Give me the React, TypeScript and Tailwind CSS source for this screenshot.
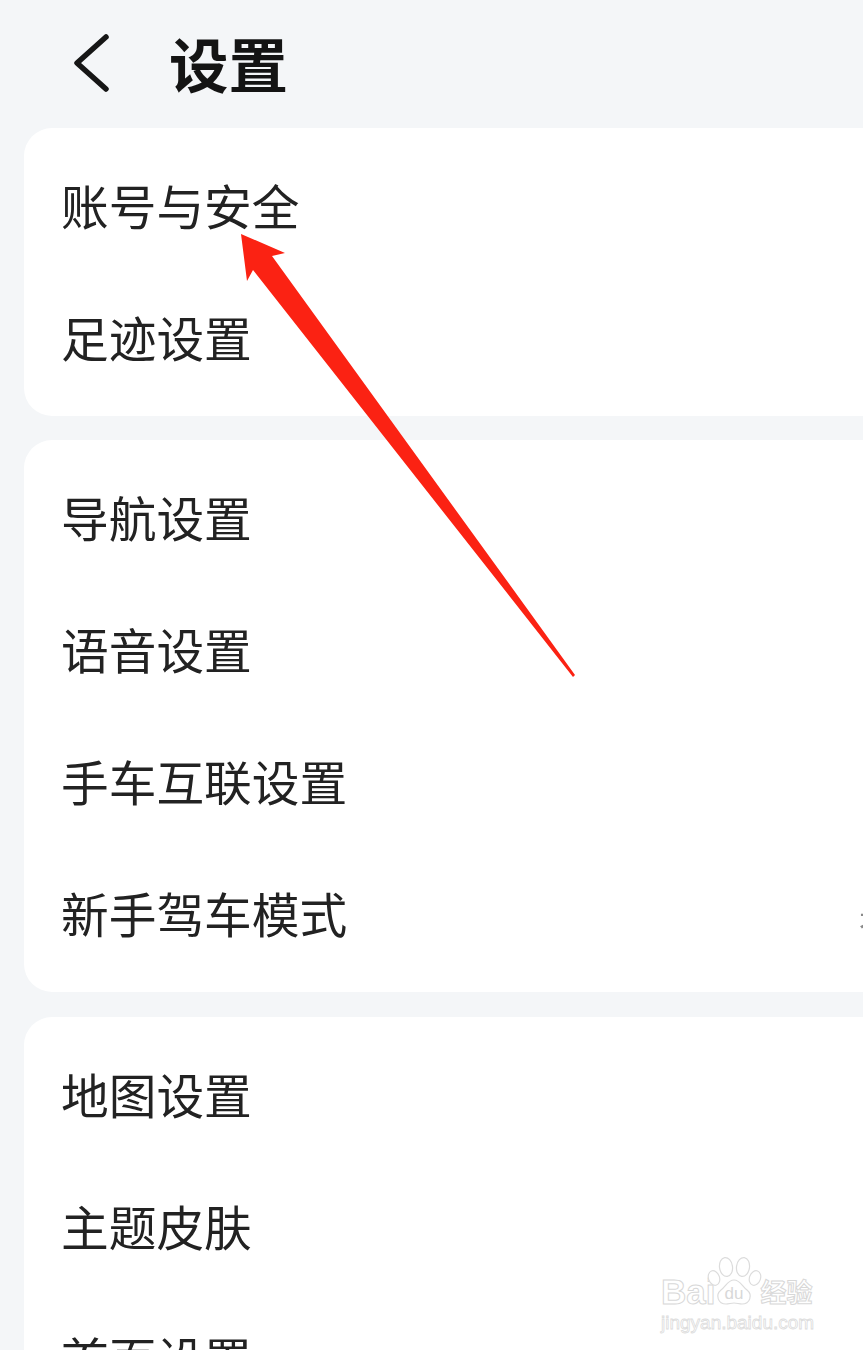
const FONT = "font-['Noto_Sans_CJK_SC','Noto_Sans',sans-serif]";

const Row = ({ label, note }: { label: string; note?: string }) => (
  <div className="flex h-[132px] items-center justify-between overflow-hidden pb-[6px] pl-[37px]">
    <span className="text-[47.7px] leading-none whitespace-nowrap text-[#222222] blur-[0.4px]">{label}</span>
    {note && <span className="mr-[-28px] shrink-0 text-[32px] leading-none text-[#8a8a8a] blur-[0.6px]">{note}</span>}
  </div>
);

const Card = ({ children, className }: { children: React.ReactNode; className: string }) => (
  <div className={`ml-[24px] rounded-l-[28px] bg-white pt-[14px] ${className}`}>{children}</div>
);

const Arrow = () => (
  <svg className="absolute top-0 left-0" width="863" height="700" viewBox="0 0 863 700">
    <polygon points="241,234 285,253 272,256 575,675 573,677 253,270 247,281" fill="#fb2213" />
  </svg>
);

const Watermark = () => (
  <div className="absolute top-[1256px] left-[661px] flex w-[160px] flex-col text-white select-none">
    <div className="flex h-[54px] items-end">
      <span className="font-['Liberation_Sans',sans-serif] text-[35px] leading-[36px] font-bold [-webkit-text-stroke:1px_#d8d8d8]">Bai</span>
      <svg className="ml-[-8px] shrink-0" width="58" height="54" viewBox="0 0 58 54" fill="white" stroke="#dcdcdc" strokeWidth="1.2">
        <ellipse cx="19" cy="11" rx="6.5" ry="9.5" transform="rotate(-8 19 11)" />
        <ellipse cx="36" cy="11" rx="6.5" ry="9.5" transform="rotate(8 36 11)" />
        <ellipse cx="7" cy="22" rx="5.5" ry="7.5" transform="rotate(-20 7 22)" />
        <ellipse cx="48" cy="22" rx="5.5" ry="7.5" transform="rotate(20 48 22)" />
        <path d="M27 24c-6 0-8 6-13 10-6 5-3 14 5 14 3 0 5-1 8-1s5 1 8 1c8 0 11-9 5-14-5-4-7-10-13-10z" />
        <text x="27" y="43" textAnchor="middle" fontSize="17" fontFamily="Liberation Sans" fill="#d8d8d8" stroke="none">du</text>
      </svg>
      <span className="ml-[-5px] pb-[6px] text-[26px] leading-none font-bold whitespace-nowrap [-webkit-text-stroke:1px_#d8d8d8]">经验</span>
    </div>
    <span className="mt-[3px] font-['Liberation_Sans',sans-serif] text-[19px] leading-none whitespace-nowrap [-webkit-text-stroke:0.8px_#dcdcdc]">jingyan.baidu.com</span>
  </div>
);

export default function App() {
  return (
    <div className={`relative h-[1350px] w-[863px] overflow-hidden bg-[#f4f6f8] ${FONT}`}>
      <div className="flex h-[128px] items-center pb-[2px]">
        <svg className="ml-[70px]" width="44" height="66" viewBox="0 0 44 66" fill="none" stroke="#161616" strokeWidth="5.5" strokeLinecap="round" strokeLinejoin="round">
          <path d="M36 7 L7 33 L36 59" />
        </svg>
        <span className="ml-[55px] text-[59.5px] leading-none font-bold text-[#141414] blur-[0.4px]">设置</span>
      </div>
      <Card className="h-[288px]">
        <Row label="账号与安全" />
        <Row label="足迹设置" />
      </Card>
      <Card className="mt-[24px] h-[552px]">
        <Row label="导航设置" />
        <Row label="语音设置" />
        <Row label="手车互联设置" />
        <Row label="新手驾车模式" note="未" />
      </Card>
      <Card className="mt-[25px] h-[400px]">
        <Row label="地图设置" />
        <Row label="主题皮肤" />
        <Row label="首页设置" />
      </Card>
      <Arrow />
      <Watermark />
    </div>
  );
}
